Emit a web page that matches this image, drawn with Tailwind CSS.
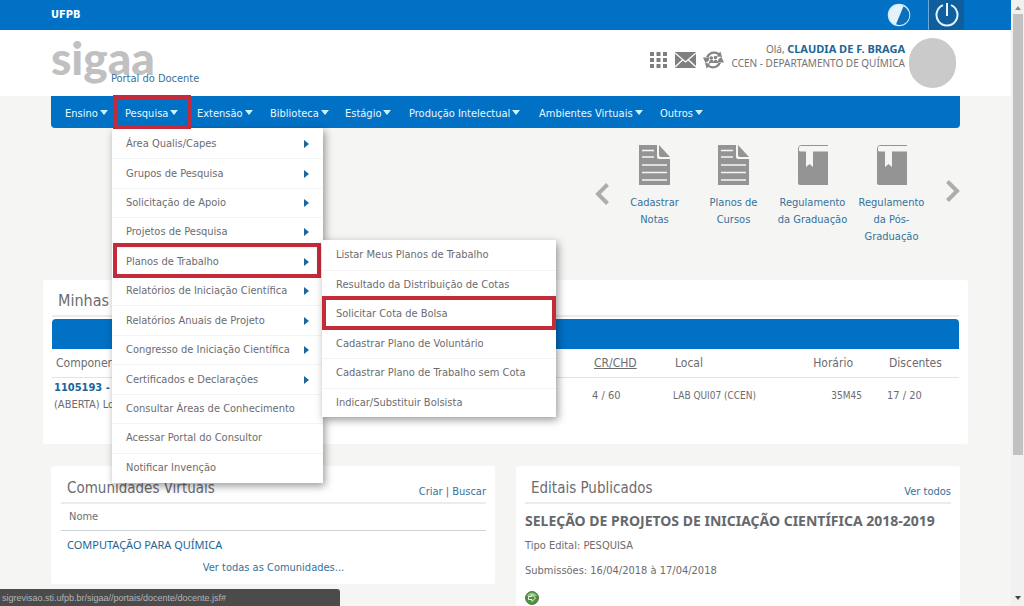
<!DOCTYPE html>
<html lang="pt-BR">
<head>
<meta charset="utf-8">
<title>SIGAA - Portal do Docente</title>
<script src="https://cdn.jsdelivr.net/npm/@tailwindcss/browser@4"></script>
</head>
<body class="flex h-screen overflow-hidden bg-[#f5f5f3] font-['DejaVu_Sans_Condensed','DejaVu_Sans',sans-serif] text-[11px] leading-4 text-[#6c6c70]">
<svg class="hidden" aria-hidden="true">
  <symbol id="doc" viewBox="0 0 31 40">
    <path fill="#949494" d="M0 0h18v12a2 2 0 0 0 2 2h11v26H0z"/>
    <path fill="#949494" d="M20 0l11 12H22a2 2 0 0 1-2-2z"/>
    <path stroke="#f5f5f3" stroke-width="1.6" d="M3 5.500h12M3 12h12M3 20h25M3 27.500h25M3 35h25"/>
  </symbol>
  <symbol id="book" viewBox="0 0 30 40">
    <path fill="none" stroke="#949494" stroke-width="1" d="M30 .5H4A3 3 0 0 0 .5 4v4"/>
    <path fill="#949494" d="M0 5c1 1 2 1.500 4 1.500h4V22l3.500-3 3.500 3V6.500h15V40H2a2 2 0 0 1-2-2z"/>
  </symbol>
</svg>

<div class="min-w-0 flex-1">
  <header>
    <div class="flex h-[30px] items-center justify-between bg-[#0071c5] pr-[47px] pl-[51px]">
      <a href="#" class="font-bold text-white">UFPB</a>
      <div class="flex h-full items-center">
        <button type="button" aria-label="Alto contraste" class="mr-[17px]">
          <svg class="size-6" viewBox="0 0 24 24"><circle cx="12" cy="12" r="10.500" fill="#e3f2fb" stroke="#d3ecfa" stroke-width="1.500"/><path fill="#0a6fbd" d="M16.500 3.200A9.800 9.800 0 0 1 9 21.300z"/></svg>
        </button>
        <button type="button" aria-label="Sair" class="flex h-full w-9 items-center justify-center border-l border-[#6aa9d8] bg-[#0f5f9f]">
          <svg class="size-6" viewBox="0 0 24 24" fill="none" stroke="#e4f5ff" stroke-width="2"><path d="M8 2.200a10.500 10.500 0 1 0 8 0M12 0v13"/></svg>
        </button>
      </div>
    </div>
    <div class="flex h-[66px] justify-between bg-white pr-[55px] pl-[51px]">
      <div class="flex">
        <span class="-mr-11 pt-1 font-['Lato',sans-serif] text-[46px] leading-[48px] font-black text-[#c0c0c0]">sigaa</span>
        <h1 class="pt-[41px] text-[#35719b]">Portal do Docente</h1>
      </div>
      <div class="flex pt-2">
        <div class="flex gap-[7px] pt-[13px] pr-2">
          <a href="#" aria-label="Módulos"><svg class="h-[18px] w-[19px]" viewBox="0 0 19 18" fill="#7f7f7f"><path d="M1 1h4v4H1zM7.500 1h4v4h-4zM14 1h4v4h-4zM1 7h4v4H1zM7.500 7h4v4h-4zM14 7h4v4h-4zM1 13h4v4H1zM7.500 13h4v4h-4zM14 13h4v4h-4z"/></svg></a>
          <a href="#" aria-label="Mensagens"><svg class="h-[18px] w-[21px]" viewBox="0 0 21 18"><path fill="#7f7f7f" d="M0 1h21v16H0z"/><path fill="none" stroke="#fff" stroke-width="1.300" d="M0 2l10.500 9L21 2M0 16l7.500-7M21 16l-7.500-7"/></svg></a>
          <a href="#" aria-label="Trocar vínculo"><svg class="h-[18px] w-[21px]" viewBox="0 0 21 18" fill="#858585"><path d="M3 6C5 1 11-1 16 2l1.500-1.500L19 6l-5.500-.5L15 4C11 1.500 7 3 5.500 6.500zM18 12C16 17 10 19 5 16l-1.500 1.500L2 12l5.500.5L6 14c4 2.500 8 1 9.500-2.500z"/><path d="M0 6.500h6.500L5.500 10 2.500 12zM21 11.500h-6.500l1-3.500 3-2z"/><circle cx="8.300" cy="7" r="1.800"/><circle cx="12.500" cy="6.500" r="1.800"/><path d="M6 12c0-4 4.500-4 4.500-1 .5-3 4.500-3 4.500 1z"/></svg></a>
        </div>
        <div class="pt-1 text-right font-['Noto_Sans',sans-serif] text-[10px] leading-[14px] text-[#737373]">
          <p>Olá, <a href="#" class="text-[11px] font-bold text-[#1c6596]">CLAUDIA DE F. BRAGA</a></p>
          <p>CCEN - DEPARTAMENTO DE QUÍMICA</p>
        </div>
        <div class="ml-1 h-[50px] w-[47px] rounded-full bg-[#cacaca]"></div>
      </div>
    </div>
  </header>

  <div class="px-[51px]">
    <nav class="relative z-10 h-8 rounded-b-[4px] bg-[#0071c5] text-[#e9f8ff]">
      <ul class="flex h-full pl-1 [&>li>button]:pt-[3px]">
        <li class="flex w-[59px] items-center pl-[10px]"><button type="button" class="flex items-center gap-[2px] whitespace-nowrap">Ensino <svg class="mb-[3px] h-[5px] w-2" viewBox="0 0 8 5"><path fill="#c9f3ff" d="M0 0h8L4 5z"/></svg></button></li>
        <li class="relative flex w-[74px] items-center pl-[11px]">
          <button type="button" aria-expanded="true" class="flex items-center gap-[2px] whitespace-nowrap">Pesquisa <svg class="mb-[3px] h-[5px] w-2" viewBox="0 0 8 5"><path fill="#c9f3ff" d="M0 0h8L4 5z"/></svg></button>
          <div class="pointer-events-none absolute -top-px -left-px z-20 h-[34px] w-[78px] border-4 border-[#c32a3a]"></div>
          <div class="absolute top-8 -left-[2px] z-10">
            <ul id="menu" class="grid h-[355px] w-[211px] auto-rows-fr bg-white pt-px pb-px text-[#6c6c70] shadow-[2px_3px_8px_rgba(0,0,0,0.4)]"></ul>
            <div class="pointer-events-none absolute top-[115px] left-px h-[35px] w-[208px] border-4 border-[#c32a3a]"></div>
          </div>
          <div class="absolute top-[144px] left-52 z-10">
            <ul id="submenu" class="grid h-[177px] w-[234px] auto-rows-fr bg-white text-[#6c6c70] shadow-[2px_3px_8px_rgba(0,0,0,0.4)]"></ul>
            <div class="pointer-events-none absolute top-14 left-0 h-[34px] w-[234px] border-4 border-[#c32a3a]"></div>
          </div>
        </li>
        <li class="flex w-[73px] items-center pl-[9px]"><button type="button" class="flex items-center gap-[2px] whitespace-nowrap">Extensão <svg class="mb-[3px] h-[5px] w-2" viewBox="0 0 8 5"><path fill="#c9f3ff" d="M0 0h8L4 5z"/></svg></button></li>
        <li class="flex w-[76px] items-center pl-[9px]"><button type="button" class="flex items-center gap-[2px] whitespace-nowrap">Biblioteca <svg class="mb-[3px] h-[5px] w-2" viewBox="0 0 8 5"><path fill="#c9f3ff" d="M0 0h8L4 5z"/></svg></button></li>
        <li class="flex w-16 items-center pl-2"><button type="button" class="flex items-center gap-[2px] whitespace-nowrap">Estágio <svg class="mb-[3px] h-[5px] w-2" viewBox="0 0 8 5"><path fill="#c9f3ff" d="M0 0h8L4 5z"/></svg></button></li>
        <li class="flex w-[130px] items-center pl-2"><button type="button" class="flex items-center gap-[2px] whitespace-nowrap">Produção Intelectual <svg class="mb-[3px] h-[5px] w-2" viewBox="0 0 8 5"><path fill="#c9f3ff" d="M0 0h8L4 5z"/></svg></button></li>
        <li class="flex w-[120px] items-center pl-2"><button type="button" class="flex items-center gap-[2px] whitespace-nowrap">Ambientes Virtuais <svg class="mb-[3px] h-[5px] w-2" viewBox="0 0 8 5"><path fill="#c9f3ff" d="M0 0h8L4 5z"/></svg></button></li>
        <li class="flex items-center pl-[9px]"><button type="button" class="flex items-center gap-[2px] whitespace-nowrap">Outros <svg class="mb-[3px] h-[5px] w-2" viewBox="0 0 8 5"><path fill="#c9f3ff" d="M0 0h8L4 5z"/></svg></button></li>
      </ul>
    </nav>

    <section class="flex h-[152px] justify-end pt-[17px] text-center leading-[17px] text-[#35719b]">
      <button type="button" aria-label="Anterior" class="mt-[38px] mr-[6px] h-[22px] self-start"><svg class="h-[22px] w-[14px]" viewBox="0 0 14 22" fill="none" stroke="#adadad" stroke-width="4"><path d="M12.500 1.500L3 11l9.500 9.500"/></svg></button>
      <a href="#" class="flex w-[79px] flex-col items-center gap-[9px]"><svg class="h-10 w-[31px]"><use href="#doc"/></svg><span>Cadastrar<br>Notas</span></a>
      <a href="#" class="flex w-[79px] flex-col items-center gap-[9px]"><svg class="h-10 w-[31px]"><use href="#doc"/></svg><span>Planos de<br>Cursos</span></a>
      <a href="#" class="flex w-[79px] flex-col items-center gap-[9px]"><svg class="h-10 w-[30px]"><use href="#book"/></svg><span class="whitespace-nowrap">Regulamento<br>da Graduação</span></a>
      <a href="#" class="flex w-[79px] flex-col items-center gap-[9px]"><svg class="h-10 w-[30px]"><use href="#book"/></svg><span class="whitespace-nowrap">Regulamento<br>da Pós-<br>Graduação</span></a>
      <button type="button" aria-label="Próximo" class="mt-[35px] ml-[15px] h-[22px] self-start"><svg class="h-[22px] w-[14px]" viewBox="0 0 14 22" fill="none" stroke="#adadad" stroke-width="4"><path d="M1.500 1.500L11 11l-9.500 9.500"/></svg></button>
    </section>

    <section class="-mx-2 h-[164px] rounded-[3px] bg-white px-[9px] pt-[9px]">
      <h2 class="h-7 border-b-2 border-[#ececec] pl-[6px] text-base leading-6">Minhas Turmas</h2>
      <table class="mt-[2px] w-full table-fixed text-left">
        <colgroup><col><col class="w-[81px]"><col class="w-[94px]"><col class="w-[95px]"><col class="w-[97px]"></colgroup>
        <thead>
          <tr><td colspan="5" class="h-[30px] rounded-t-[4px] bg-[#0071c5]"></td></tr>
          <tr class="h-7 border-b border-[#e3e3e3] text-xs [&>th]:font-normal">
            <th class="pl-1">Componente Curricular</th><th class="pl-[2px] underline">CR/CHD</th><th class="pl-[2px]">Local</th><th class="pr-[9px] text-right">Horário</th><th class="pl-[27px]">Discentes</th>
          </tr>
        </thead>
        <tbody>
          <tr class="h-[37px]">
            <td class="pl-[2px] leading-[17px]"><a href="#" class="text-[11px] font-bold text-[#1c6596]">1105193 - QUÍMICA</a><br>(ABERTA) Local: LAB QUI07</td>
            <td>4 / 60</td><td class="text-[10px] whitespace-nowrap">LAB QUI07 (CCEN)</td><td class="text-right text-[10px]">35M45</td><td class="pl-[25px]">17 / 20</td>
          </tr>
        </tbody>
      </table>
    </section>

    <div class="mt-[22px] flex gap-[21px]">
      <section class="h-[118px] w-[444px] rounded-[3px] bg-white pr-[9px] pl-[10px]">
        <div class="flex h-[38px] items-start justify-between border-b-2 border-[#ececec] pl-[6px]">
          <h2 class="pt-[10px] text-[15px] leading-6">Comunidades Virtuais</h2>
          <p class="pt-[18px] text-[#35719b]"><a href="#">Criar</a> | <a href="#">Buscar</a></p>
        </div>
        <table class="w-full text-left">
          <thead><tr class="h-[26px] border-b border-[#ccd2d6]"><th class="pl-2 font-normal">Nome</th></tr></thead>
          <tbody><tr class="h-[30px]"><td class="pl-[6px] font-['Noto_Sans',sans-serif] text-[#1c6596]"><a href="#">COMPUTAÇÃO PARA QUÍMICA</a></td></tr></tbody>
        </table>
        <p class="text-center text-[#35719b]"><a href="#">Ver todas as Comunidades...</a></p>
      </section>
      <section class="h-40 min-w-0 flex-1 rounded-[3px] bg-white pr-[9px] pl-[9px]">
        <div class="flex h-[38px] items-start justify-between border-b-2 border-[#ececec] pl-[6px]">
          <h2 class="pt-[10px] text-[15px] leading-6">Editais Publicados</h2>
          <p class="pt-[18px] text-[#35719b]"><a href="#">Ver todos</a></p>
        </div>
        <h3 class="mt-2 font-['Noto_Sans',sans-serif] text-sm leading-[18px] font-bold whitespace-nowrap text-[#66686d]">SELEÇÃO DE PROJETOS DE INICIAÇÃO CIENTÍFICA 2018-2019</h3>
        <p class="mt-2">Tipo Edital: PESQUISA</p>
        <p class="mt-[9px]">Submissões: 16/04/2018 à 17/04/2018</p>
        <a href="#" aria-label="Abrir edital" class="mt-3 block"><svg class="size-[14px]" viewBox="0 0 14 14"><circle cx="7" cy="7" r="6.500" fill="#4f8f3d" stroke="#5d7a52"/><path fill="#8fc77e" d="M2 5a5.500 5.500 0 0 1 10 0z"/><path fill="#4f8f3d" stroke="#e9f7e4" d="M3.500 5.500H7V3.500L10.500 7 7 10.500v-2H3.500z"/></svg></a>
      </section>
    </div>
  </div>
</div>

<div class="flex w-[13px] flex-col items-center bg-[#f1f1f1] pl-px" aria-hidden="true">
  <svg class="mt-1.5 h-1 w-1.5" viewBox="0 0 6 4"><path fill="#8a8a8a" d="M0 4h6L3 0z"/></svg>
  <div class="mt-1 h-[441px] w-[10px] bg-[#c1c1c1]"></div>
  <svg class="mt-auto mb-1.5 h-1 w-1.5" viewBox="0 0 6 4"><path fill="#444" d="M0 0h6L3 4z"/></svg>
</div>

<div class="fixed bottom-0 left-0 z-20 h-[17px] w-[340px] rounded-tr-[3px] bg-[#4b4b4b] pl-[2px] font-['Liberation_Sans',sans-serif] text-[9px] leading-[18px] text-[#b5b5b5]">sigrevisao.sti.ufpb.br/sigaa//portais/docente/docente.jsf#</div>

<script>
  const arrow = '<svg class="h-2 w-[5px]" viewBox="0 0 5 8"><path fill="#1b669c" d="M0 0v8l5-4z"/></svg>';
  const row = (label, more) => '<li class="border-t border-[#f3f3f3] first:border-t-0"><a href="#" class="flex h-full items-center justify-between pr-[14px] pl-[14px] whitespace-nowrap">' + label + (more ? arrow : '') + '</a></li>';
  const main = ['Área Qualis/Capes', 'Grupos de Pesquisa', 'Solicitação de Apoio', 'Projetos de Pesquisa', 'Planos de Trabalho', 'Relatórios de Iniciação Científica', 'Relatórios Anuais de Projeto', 'Congresso de Iniciação Científica', 'Certificados e Declarações', 'Consultar Áreas de Conhecimento', 'Acessar Portal do Consultor', 'Notificar Invenção'];
  const sub = ['Listar Meus Planos de Trabalho', 'Resultado da Distribuição de Cotas', 'Solicitar Cota de Bolsa', 'Cadastrar Plano de Voluntário', 'Cadastrar Plano de Trabalho sem Cota', 'Indicar/Substituir Bolsista'];
  document.getElementById('menu').innerHTML = main.map((t, i) => row(t, i < 9)).join('');
  document.getElementById('submenu').innerHTML = sub.map(t => row(t, false)).join('');
</script>
</body>
</html>
